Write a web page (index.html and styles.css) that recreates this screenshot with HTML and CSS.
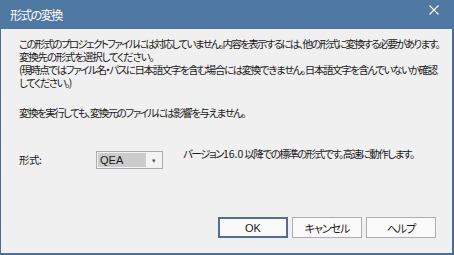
FILE: index.html
```html
<!DOCTYPE html>
<html lang="ja">
<head>
<meta charset="utf-8">
<title>形式の変換</title>
<link rel="stylesheet" href="styles.css">
</head>
<body>
<div class="window">
  <div class="titlebar">
    <span class="title">形式の変換</span>
    <span class="close">
      <svg width="10" height="10" viewBox="0 0 10 10"><path d="M0.5 0.5L9.5 9.5M9.5 0.5L0.5 9.5" stroke="#ffffff" stroke-width="1.1" fill="none"/></svg>
    </span>
  </div>
  <div class="content">
    <p class="msg"><span class="tight">この形式のプロジェクトファイルには対応していません。内容を表示するには、他の形式に変換する必要があります。</span><br><span class="loose">変換先の形式を選択してください。</span><br><span class="mid">(現時点ではファイル名・パスに日本語文字を含む場合には変換できません。日本語文字を含んでいないか確認</span><br>してください。)</p>
    <p class="note">変換を実行しても、変換元のファイルには影響を与えません。</p>
    <div class="format-row">
      <span class="label">形式:</span>
      <div class="combo">
        <span class="value">QEA</span>
        <span class="arrow">▾</span>
      </div>
      <span class="desc">バージョン<span class="num">16.0</span>以降での標準の形式です。高速に動作します。</span>
    </div>
    <div class="buttons">
      <button class="btn default">OK</button>
      <button class="btn">キャンセル</button>
      <button class="btn">ヘルプ</button>
    </div>
  </div>
</div>
</body>
</html>
```
FILE: styles.css
```css
html, body {
  margin: 0;
  padding: 0;
}
body {
  width: 454px;
  height: 255px;
  overflow: hidden;
  font-family: "Noto Sans CJK JP", "Noto Sans", sans-serif;
  font-feature-settings: "palt";
}
.window {
  box-sizing: border-box;
  width: 454px;
  height: 255px;
  background: #f0f0f0;
  border-left: 1px solid #4a6f96;
  border-right: 2px solid #4a6f96;
  border-bottom: 2px solid #4a6f96;
  display: flex;
  flex-direction: column;
}
.titlebar {
  height: 29px;
  flex: none;
  background: #4f79a2;
  display: flex;
  align-items: flex-start;
  justify-content: space-between;
  margin-left: -1px;
  margin-right: -2px;
}
.title {
  color: #ffffff;
  font-size: 12px;
  letter-spacing: -1.6px;
  line-height: 14px;
  margin-top: 8px;
  margin-left: 10px;
}
.close {
  display: flex;
  margin-top: 5px;
  margin-right: 15px;
}
.content {
  flex: 1;
  display: flex;
  flex-direction: column;
  padding: 8px 16px 15px 18px;
  color: #1a1a1a;
  font-size: 10.5px;
  letter-spacing: -1.5px;
}
.msg {
  margin: 0;
  line-height: 13px;
  white-space: nowrap;
}
.tight {
  letter-spacing: -1.68px;
}
.loose {
  letter-spacing: -1.2px;
}
.mid {
  letter-spacing: -1.42px;
}
.note {
  margin: 17px 0 0 0;
  line-height: 13px;
  white-space: nowrap;
}
.format-row {
  margin-top: 28px;
  display: flex;
  align-items: flex-start;
}
.label {
  width: 77px;
  flex: none;
  line-height: 13px;
  margin-top: 6px;
  letter-spacing: -0.5px;
}
.combo {
  box-sizing: border-box;
  width: 67px;
  height: 18px;
  margin-top: 4px;
  border: 1px solid #acacac;
  background: #f3f3f3;
  display: flex;
  align-items: stretch;
  padding: 1px;
  flex: none;
}
.value {
  flex: 1;
  background: #cccccc;
  line-height: 14px;
  padding-left: 2px;
  font-family: "Liberation Sans", sans-serif;
  letter-spacing: 0;
  font-size: 11px;
}
.arrow {
  width: 15px;
  text-align: center;
  font-size: 7px;
  line-height: 14px;
  color: #555555;
  letter-spacing: 0;
}
.desc {
  margin-left: 20px;
  line-height: 13px;
  white-space: nowrap;
}
.num {
  letter-spacing: 0;
  padding-right: 1px;
}
.buttons {
  margin-top: auto;
  display: flex;
  justify-content: flex-end;
  gap: 4px;
}
.btn {
  box-sizing: border-box;
  width: 70px;
  height: 21px;
  border: 1px solid #adadad;
  background: #fafafa;
  font-family: "Noto Sans CJK JP", "Noto Sans", sans-serif;
  font-feature-settings: "palt";
  font-size: 11px;
  letter-spacing: -1px;
  color: #1a1a1a;
  padding: 0;
  margin: 0;
}
.btn.default {
  border: 2px solid #4f6f94;
  font-family: "Liberation Sans", sans-serif;
  letter-spacing: 0;
}
```
